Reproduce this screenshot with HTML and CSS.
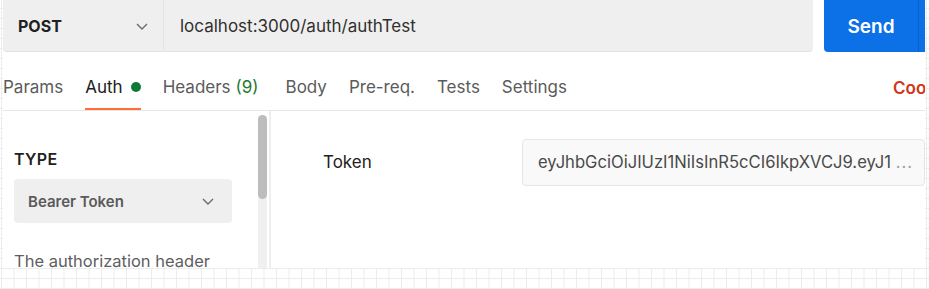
FILE: index.html
```html
<!DOCTYPE html>
<html lang="en">
<head>
  <meta charset="UTF-8" />
  <meta name="viewport" content="width=device-width, initial-scale=1.0"/>
  <title>authTest</title>
  <link rel="stylesheet" href="styles.css">
</head>
<body>

  <div class="app">
    <div class="urlbar">
      <div class="method">
        <span>POST</span>
        <svg class="chev" width="14" height="14" viewBox="0 0 14 14"><path d="M2 5l5 5 5-5" fill="none" stroke="#6b6b6b" stroke-width="1.4"/></svg>
      </div>
      <div class="url">localhost:3000/auth/authTest</div>
      <button class="send"><span>Send</span><i class="split"></i></button>
    </div>

    <div class="tabs">
      <div class="tab">Params</div>
      <div class="tab active">Auth <span class="dot"></span></div>
      <div class="tab">Headers <span class="count">(9)</span></div>
      <div class="tab body-tab">Body</div>
      <div class="tab">Pre-req.</div>
      <div class="tab">Tests</div>
      <div class="tab">Settings</div>
      <div class="cookies">Cookies</div>
    </div>

    <div class="main">
      <div class="side">
        <div class="side-inner">
          <h3>TYPE</h3>
          <div class="select">
            <span>Bearer Token</span>
            <svg width="14" height="14" viewBox="0 0 14 14"><path d="M2 5l5 5 5-5" fill="none" stroke="#6b6b6b" stroke-width="1.4"/></svg>
          </div>
          <p>The authorization header will be automatically generated when you send the request.</p>
        </div>
        <div class="scroll"><div class="thumb"></div></div>
      </div>
      <div class="content">
        <label>Token</label>
        <div class="field"><span>eyJhbGciOiJIUzI1NiIsInR5cCI6IkpXVCJ9.eyJ1</span> <span class="more">...</span></div>
      </div>
    </div>
  </div>

</body>
</html>
```

FILE: styles.css
```css
body {
  margin: 0;
  font-family: Inter, "Noto Sans", sans-serif;
  height: 289px;
  overflow: hidden;
  background-color: #fff;
  background-image:
    linear-gradient(to right, #ececec 1px, transparent 1px),
    linear-gradient(to bottom, #ececec 1px, transparent 1px);
  background-size: 12.5px 10px;
  background-position: 1px 268px;
}

.app {
  margin: 0 4px 0 3px;
  height: 268px;
  background: #fff;
  display: flex;
  flex-direction: column;
  overflow: hidden;
}

.urlbar {
  display: flex;
  height: 52px;
  flex-shrink: 0;
}

.method {
  width: 160px;
  background: #efefef;
  border-bottom: 1px solid #e2e2e2;
  border-radius: 0 0 0 4px;
  display: flex;
  align-items: center;
  justify-content: space-between;
  padding: 0 14px 0 15px;
  box-sizing: border-box;
  font-weight: 700;
  font-size: 16px;
  color: #212121;
}

.url {
  width: 650px;
  background: #efefef;
  border-left: 1px solid #e3e3e3;
  border-bottom: 1px solid #e2e2e2;
  border-radius: 0 0 4px 0;
  display: flex;
  align-items: center;
  padding-left: 16px;
  box-sizing: border-box;
  font-size: 17px;
  color: #303030;
}

.send {
  margin-left: 11px;
  flex: 1;
  border: none;
  background: #0c71e6;
  color: #fff;
  border-radius: 0 0 0 4px;
  font-family: inherit;
  font-size: 19px;
  font-weight: 600;
  display: flex;
  align-items: center;
  padding: 0;
}

.send span {
  width: 94px;
  text-align: center;
}

.send .split {
  width: 1px;
  align-self: stretch;
  background: #0a62c9;
}

.tabs {
  height: 59px;
  flex-shrink: 0;
  display: flex;
  align-items: stretch;
  gap: 22px;
  border-bottom: 1px solid #e6e6e6;
  box-sizing: border-box;
  font-size: 17px;
  color: #5b5b5b;
}

.tab {
  display: flex;
  align-items: center;
  padding-top: 14px;
  border-bottom: 2px solid transparent;
}

.tab.active {
  color: #212121;
  border-bottom-color: #ff6c37;
}

.body-tab {
  margin-left: 5px;
}

.dot {
  width: 10px;
  height: 10px;
  border-radius: 50%;
  background: #0f7a37;
  margin-left: 8px;
}

.count {
  color: #1e7a34;
  margin-left: 5px;
}

.cookies {
  margin-left: auto;
  display: flex;
  align-items: center;
  padding-top: 14px;
  color: #d1361a;
  font-weight: 600;
  width: 32px;
  overflow: hidden;
  white-space: nowrap;
}

.main {
  flex: 1;
  display: flex;
  min-height: 0;
}

.side {
  width: 266px;
  border-right: 2px solid #efefef;
  display: flex;
  position: relative;
  overflow: hidden;
}

.side-inner {
  width: 218px;
  padding: 38px 0 0 11px;
}

.side h3 {
  margin: 0 0 10px;
  font-size: 16px;
  font-weight: 600;
  color: #212121;
  letter-spacing: 0.3px;
}

.select {
  height: 44px;
  width: 218px;
  background: #efefef;
  border-radius: 4px;
  display: flex;
  align-items: center;
  justify-content: space-between;
  padding: 0 17px 0 14px;
  box-sizing: border-box;
  font-size: 15px;
  font-weight: 600;
  color: #5a5a5a;
}

.side p {
  margin: 27px 0 0;
  font-size: 16.5px;
  line-height: 22px;
  color: #5e5e5e;
}

.scroll {
  position: absolute;
  left: 255px;
  top: 4px;
  bottom: 0;
  width: 9px;
  background: #f0f0f0;
  border-radius: 5px 5px 0 0;
}

.thumb {
  height: 84px;
  background: #bdbdbd;
  border-radius: 5px;
}

.content {
  flex: 1;
  display: flex;
  align-items: flex-start;
  padding-top: 28px;
}

.content label {
  width: 199px;
  margin-left: 52px;
  line-height: 47px;
  font-size: 17px;
  color: #212121;
}

.field {
  width: 403px;
  height: 47px;
  box-sizing: border-box;
  background: #f9f9f9;
  border: 1px solid #e6e6e6;
  border-radius: 4px;
  padding: 0 12px 0 15px;
  line-height: 45px;
  font-size: 16.6px;
  color: #4a4a4a;
  white-space: nowrap;
  overflow: hidden;
}

.field .more {
  color: #a0a0a0;
  letter-spacing: 1px;
}
```
